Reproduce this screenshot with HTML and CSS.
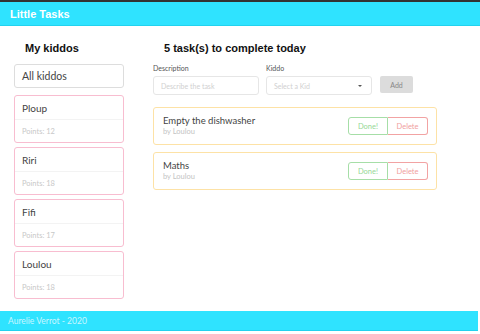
FILE: index.html
```html
<!DOCTYPE html>
<html lang="en">

<head>
  <meta charset="UTF-8">
  <meta name="viewport" content="width=device-width, initial-scale=1.0">
  <title>Little Tasks</title>
  <link rel="stylesheet" href="styles.css">
</head>

<body>
  <header class="topbar">
    <span class="brand">Little Tasks</span>
  </header>

  <main class="page">
    <section class="kiddos">
      <h2 class="title">My kiddos</h2>
      <div class="kid-all">All kiddos</div>
      <div class="kid">
        <div class="kid-name">Ploup</div>
        <div class="kid-points">Points: 12</div>
      </div>
      <div class="kid">
        <div class="kid-name">Riri</div>
        <div class="kid-points">Points: 18</div>
      </div>
      <div class="kid">
        <div class="kid-name">Fifi</div>
        <div class="kid-points">Points: 17</div>
      </div>
      <div class="kid">
        <div class="kid-name">Loulou</div>
        <div class="kid-points">Points: 18</div>
      </div>
    </section>

    <section class="tasks">
      <h2 class="title tasks-title">5 task(s) to complete today</h2>
      <form class="new-task">
        <label class="field">
          <span class="label">Description</span>
          <input type="text" class="input" placeholder="Describe the task">
        </label>
        <label class="field">
          <span class="label">Kiddo</span>
          <span class="input select">
            <span class="placeholder">Select a Kid</span>
            <span class="caret"></span>
          </span>
        </label>
        <button type="button" class="add-btn">Add</button>
      </form>

      <div class="task">
        <div class="task-info">
          <div class="task-name">Empty the dishwasher</div>
          <div class="task-by">by Loulou</div>
        </div>
        <div class="task-actions">
          <button class="btn btn-done">Done!</button>
          <button class="btn btn-delete">Delete</button>
        </div>
      </div>
      <div class="task">
        <div class="task-info">
          <div class="task-name">Maths</div>
          <div class="task-by">by Loulou</div>
        </div>
        <div class="task-actions">
          <button class="btn btn-done">Done!</button>
          <button class="btn btn-delete">Delete</button>
        </div>
      </div>
    </section>
  </main>

  <footer class="footer">Aurelie Verrot - 2020</footer>
</body>

</html>
```

FILE: styles.css
```css
body {
  margin: 0;
  font-family: Lato, 'Open Sans', sans-serif;
  color: #444;
  background: #fff;
  border-top: 2px solid #333;
}

.topbar {
  height: 23px;
  background: #2fe3ff;
  border-bottom: 1px solid #22d2ee;
  display: flex;
  align-items: center;
  padding-left: 10px;
}

.brand {
  font-family: 'Liberation Sans', Arial, sans-serif;
  font-weight: bold;
  font-size: 11px;
  color: #fff;
}

.page {
  display: flex;
  padding: 15px 0 0 14px;
  gap: 29px;
  height: 270px;
}

.kiddos {
  width: 110px;
}

.title {
  font-family: 'Liberation Sans', Arial, sans-serif;
  font-size: 11px;
  line-height: 14px;
  font-weight: bold;
  color: #111;
  margin: 0 0 9px;
  padding-left: 11px;
}

.kid-all {
  box-sizing: border-box;
  height: 24px;
  border: 1px solid #ddd;
  border-radius: 3px;
  font-size: 10.5px;
  padding-left: 7px;
  display: flex;
  align-items: center;
  margin-bottom: 7px;
}

.kid {
  box-sizing: border-box;
  height: 48px;
  border: 1px solid #f8bdd0;
  border-radius: 3px;
  margin-bottom: 4px;
}

.kid-name {
  height: 23px;
  display: flex;
  align-items: center;
  padding-left: 7px;
  font-size: 10px;
  border-bottom: 1px solid #f3f3f3;
}

.kid-points {
  height: 22px;
  display: flex;
  align-items: center;
  padding-left: 7px;
  font-size: 7.5px;
  color: #c8c8c8;
}

.tasks {
  width: 284px;
}

.tasks-title {
  margin-bottom: 9px;
}

.new-task {
  display: flex;
  align-items: flex-end;
  gap: 7px;
  margin-bottom: 12px;
}

.field {
  display: flex;
  flex-direction: column;
}

.label {
  font-size: 7px;
  color: #555;
  margin-bottom: 4px;
}

.input {
  box-sizing: border-box;
  width: 106px;
  height: 19px;
  border: 1px solid #e6e6e6;
  border-radius: 3px;
  font-family: inherit;
  font-size: 7px;
  padding: 0 7px;
  outline: none;
  color: #ccc;
}

.input::placeholder {
  color: #d0d0d0;
}

.select {
  display: flex;
  align-items: center;
  justify-content: space-between;
}

.placeholder {
  color: #d0d0d0;
}

.caret {
  width: 0;
  height: 0;
  border-left: 2px solid transparent;
  border-right: 2px solid transparent;
  border-top: 2px solid #555;
  margin-right: 2px;
}

.add-btn {
  margin: 0 0 2px 1px;
  width: 33px;
  height: 17px;
  border: none;
  border-radius: 2px;
  background: #dcdcdc;
  color: #888;
  font-family: inherit;
  font-size: 7px;
  padding: 0;
}

.task {
  box-sizing: border-box;
  height: 38px;
  border: 1px solid #fde2a6;
  border-radius: 3px;
  display: flex;
  align-items: center;
  justify-content: space-between;
  padding: 0 8px 0 9px;
  margin-bottom: 7px;
}

.task-name {
  font-size: 9.5px;
  line-height: 12px;
}

.task-by {
  font-size: 7.5px;
  color: #c4c4c4;
  line-height: 10px;
}

.task-actions {
  display: flex;
}

.btn {
  box-sizing: border-box;
  width: 40px;
  height: 18px;
  background: #fff;
  font-family: inherit;
  font-size: 7.5px;
  padding: 0;
}

.btn-done {
  border: 1px solid #a6dea7;
  border-radius: 3px 0 0 3px;
  color: #96d897;
}

.btn-delete {
  border: 1px solid #f2a3a3;
  border-left: none;
  border-radius: 0 3px 3px 0;
  color: #f0a0a0;
}

.footer {
  height: 19px;
  background: #2fe3ff;
  border-bottom: 1px solid #22d2ee;
  margin-right: 2px;
  display: flex;
  align-items: center;
  padding-left: 8px;
  font-size: 8.5px;
  color: #c9f6ff;
}
```
